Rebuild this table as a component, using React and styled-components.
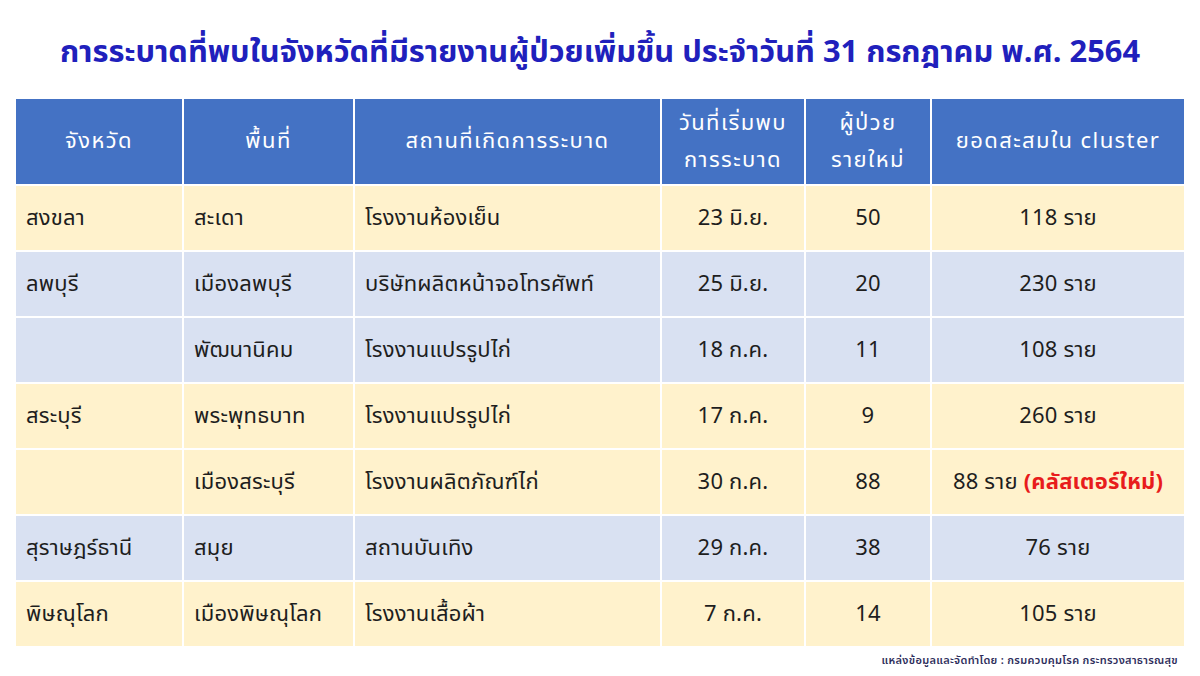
import React from 'react'
import styled, { createGlobalStyle } from 'styled-components'

const GlobalStyle = createGlobalStyle`
  html, body {
    margin: 0;
    padding: 0;
    background: #ffffff;
  }
  body {
    font-family: "Noto Sans Thai", "Noto Sans", "Liberation Sans", sans-serif;
  }
`

const Page = styled.div`
  width: 1200px;
  height: 676px;
  display: flex;
  flex-direction: column;
  align-items: center;
  padding: 0 16px;
  box-sizing: border-box;
  overflow: hidden;
`

const Title = styled.h1`
  margin: 30px 0 0;
  height: 69px;
  font-size: 30.8px;
  font-weight: 700;
  color: #2020bc;
  text-align: center;
  white-space: nowrap;
  line-height: 46px;
`

const Grid = styled.div`
  display: grid;
  width: 1168px;
  grid-template-columns: 166px 169px 305px 142px 124px 252px;
  grid-auto-rows: 64px;
  grid-template-rows: 85px;
  column-gap: 2px;
  row-gap: 2px;
  background: #ffffff;
`

const HeadCell = styled.div`
  background: #4472c4;
  color: #ffffff;
  font-size: 22px;
  letter-spacing: 1.4px;
  line-height: 37px;
  display: flex;
  align-items: center;
  justify-content: center;
  text-align: center;
  white-space: nowrap;
`

const Cell = styled.div`
  background: ${p => (p.$tone === 'blue' ? '#d9e1f2' : '#fff2cc')};
  color: #1e1e1e;
  font-size: 22px;
  letter-spacing: 0.2px;
  white-space: nowrap;
  display: flex;
  align-items: center;
  justify-content: ${p => (p.$center ? 'center' : 'flex-start')};
  padding: 0 ${p => (p.$center ? 0 : 10)}px;
`

const NewTag = styled.span`
  color: #e81c1c;
  font-weight: 700;
  margin-left: 6px;
`

const Source = styled.div`
  align-self: flex-end;
  margin-top: 6px;
  margin-right: 6px;
  font-size: 11px;
  font-weight: 600;
  letter-spacing: 0.3px;
  color: #2e2e5c;
`

const headers = [
  'จังหวัด',
  'พื้นที่',
  'สถานที่เกิดการระบาด',
  ['วันที่เริ่มพบ', 'การระบาด'],
  ['ผู้ป่วย', 'รายใหม่'],
  'ยอดสะสมใน cluster'
]

const rows = [
  { tone: 'cream', prov: 'สงขลา', area: 'สะเดา', place: 'โรงงานห้องเย็น', date: '23 มิ.ย.', cases: '50', total: '118 ราย' },
  { tone: 'blue', prov: 'ลพบุรี', area: 'เมืองลพบุรี', place: 'บริษัทผลิตหน้าจอโทรศัพท์', date: '25 มิ.ย.', cases: '20', total: '230 ราย' },
  { tone: 'blue', prov: '', area: 'พัฒนานิคม', place: 'โรงงานแปรรูปไก่', date: '18 ก.ค.', cases: '11', total: '108 ราย' },
  { tone: 'cream', prov: 'สระบุรี', area: 'พระพุทธบาท', place: 'โรงงานแปรรูปไก่', date: '17 ก.ค.', cases: '9', total: '260 ราย' },
  { tone: 'cream', prov: '', area: 'เมืองสระบุรี', place: 'โรงงานผลิตภัณฑ์ไก่', date: '30 ก.ค.', cases: '88', total: '88 ราย', isNew: true },
  { tone: 'blue', prov: 'สุราษฎร์ธานี', area: 'สมุย', place: 'สถานบันเทิง', date: '29 ก.ค.', cases: '38', total: '76 ราย' },
  { tone: 'cream', prov: 'พิษณุโลก', area: 'เมืองพิษณุโลก', place: 'โรงงานเสื้อผ้า', date: '7 ก.ค.', cases: '14', total: '105 ราย' }
]

export default function App() {
  return (
    <>
      <GlobalStyle />
      <Page>
        <Title>การระบาดที่พบในจังหวัดที่มีรายงานผู้ป่วยเพิ่มขึ้น ประจำวันที่ 31 กรกฎาคม พ.ศ. 2564</Title>
        <Grid>
          {headers.map((h, i) => (
            <HeadCell key={i}>
              {Array.isArray(h) ? (
                <span>
                  {h[0]}
                  <br />
                  {h[1]}
                </span>
              ) : (
                h
              )}
            </HeadCell>
          ))}
          {rows.map((r, i) => (
            <React.Fragment key={i}>
              <Cell $tone={r.tone}>{r.prov}</Cell>
              <Cell $tone={r.tone}>{r.area}</Cell>
              <Cell $tone={r.tone}>{r.place}</Cell>
              <Cell $tone={r.tone} $center>{r.date}</Cell>
              <Cell $tone={r.tone} $center>{r.cases}</Cell>
              <Cell $tone={r.tone} $center>
                {r.total}
                {r.isNew && <NewTag>(คลัสเตอร์ใหม่)</NewTag>}
              </Cell>
            </React.Fragment>
          ))}
        </Grid>
        <Source>แหล่งข้อมูลและจัดทำโดย : กรมควบคุมโรค กระทรวงสาธารณสุข</Source>
      </Page>
    </>
  )
}
